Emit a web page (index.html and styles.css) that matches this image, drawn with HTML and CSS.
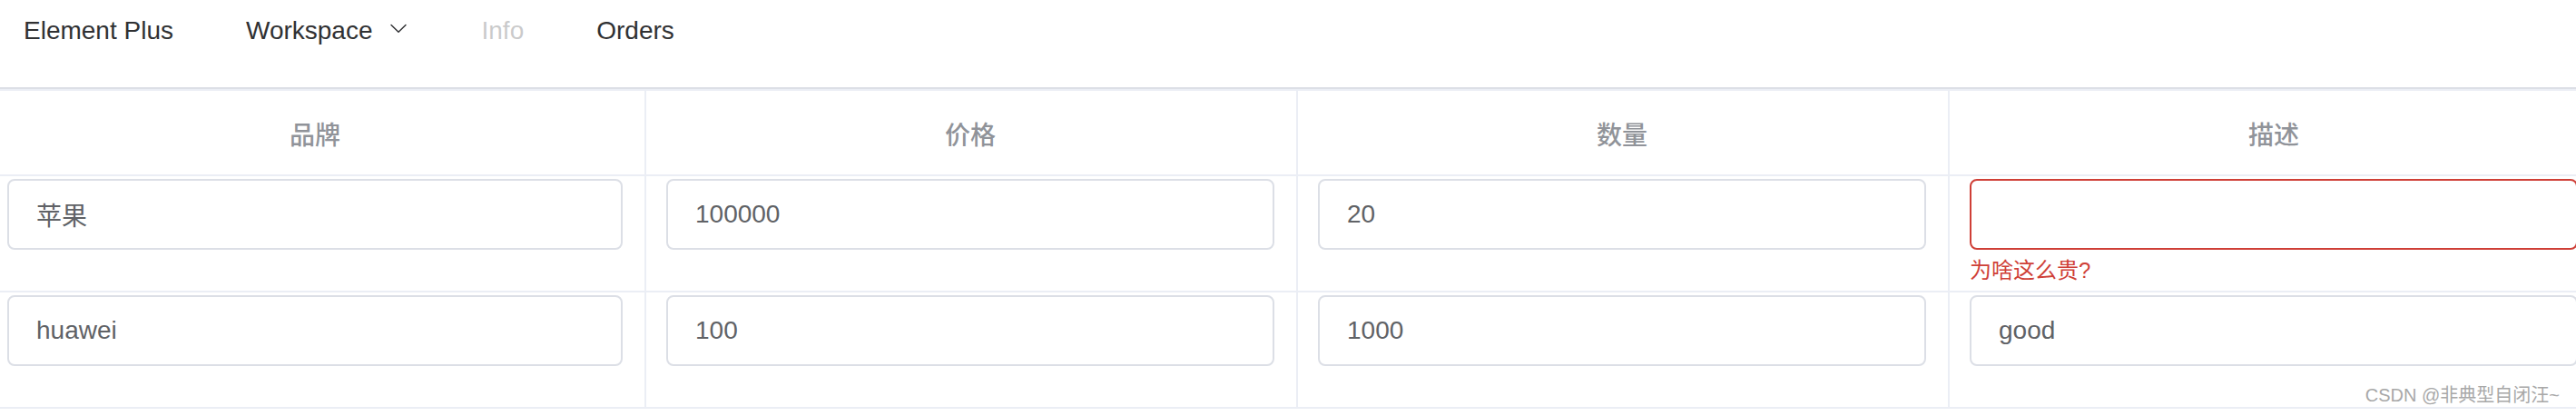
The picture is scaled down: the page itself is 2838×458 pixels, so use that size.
FILE: index.html
```html
<!DOCTYPE html>
<html lang="zh-CN">
<head>
<meta charset="utf-8">
<title>Element Plus Table Form</title>
<link rel="stylesheet" href="styles.css">
</head>
<body>
<div class="page">
  <nav class="menu">
    <div class="menu-item">Element Plus</div>
    <div class="menu-item submenu">Workspace
      <svg class="arrow" viewBox="0 0 1024 1024" xmlns="http://www.w3.org/2000/svg"><path d="M831.872 340.864 512 652.672 192.128 340.864a30.592 30.592 0 0 0-42.752 0 29.12 29.12 0 0 0 0 41.6L489.664 714.24a32 32 0 0 0 44.672 0l340.288-331.712a29.12 29.12 0 0 0 0-41.728 30.592 30.592 0 0 0-42.752 0z"/></svg>
    </div>
    <div class="menu-item disabled">Info</div>
    <div class="menu-item">Orders</div>
  </nav>

  <div class="table">
    <div class="th">品牌</div>
    <div class="th">价格</div>
    <div class="th">数量</div>
    <div class="th">描述</div>

    <div class="td"><div class="form-item"><div class="input">苹果</div></div></div>
    <div class="td"><div class="form-item"><div class="input">100000</div></div></div>
    <div class="td"><div class="form-item"><div class="input">20</div></div></div>
    <div class="td"><div class="form-item is-error"><div class="input"></div><div class="error">为啥这么贵?</div></div></div>

    <div class="td"><div class="form-item"><div class="input">huawei</div></div></div>
    <div class="td"><div class="form-item"><div class="input">100</div></div></div>
    <div class="td"><div class="form-item"><div class="input">1000</div></div></div>
    <div class="td"><div class="form-item"><div class="input">good</div></div></div>
  </div>
</div>
<div class="watermark">CSDN @非典型自闭汪~</div>
</body>
</html>
```

FILE: styles.css
```css
* {
  box-sizing: border-box;
}

html, body {
  margin: 0;
  padding: 0;
  background: #ffffff;
}

body {
  position: relative;
  overflow: hidden;
  width: 2838px;
  height: 458px;
  font-family: "Liberation Sans", "Noto Sans CJK SC", sans-serif;
}

.page {
  margin-left: -14px;
  width: 2880px;
}

/* ---------- menu ---------- */
.menu {
  display: flex;
  height: 98px;
  border-bottom: 2px solid #dcdfe6;
}

.menu-item {
  display: flex;
  align-items: center;
  height: 68px;
  padding: 0 40px;
  font-size: 28px;
  line-height: 68px;
  color: #303133;
  white-space: nowrap;
}

.menu-item.disabled {
  opacity: 0.25;
}

.arrow {
  width: 24px;
  height: 24px;
  margin-left: 16px;
  margin-top: -6px;
  fill: #303133;
}

/* ---------- table ---------- */
.table {
  display: grid;
  grid-template-columns: 726px 718px 718px 718px;
  border-top: 2px solid #ebeef5;
}

.th {
  display: flex;
  align-items: center;
  justify-content: center;
  height: 94px;
  padding: 2px 24px 0 22px;
  border-right: 2px solid #ebeef5;
  border-bottom: 2px solid #ebeef5;
  color: #909399;
  font-size: 28px;
  font-weight: 500;
}

.td {
  padding: 3px 24px 9px 22px;
  border-right: 2px solid #ebeef5;
  border-bottom: 2px solid #ebeef5;
}

.form-item {
  padding-bottom: 36px;
}

.form-item.is-error {
  padding-bottom: 0;
}

.input {
  display: flex;
  align-items: center;
  height: 78px;
  padding: 0 30px;
  border: 2px solid #dcdfe6;
  border-radius: 8px;
  font-size: 28px;
  color: #606266;
  background: #ffffff;
}

.is-error .input {
  border-color: #cf3f37;
}

.error {
  height: 36px;
  padding-top: 11px;
  font-size: 24px;
  line-height: 24px;
  color: #cf3f37;
}

/* ---------- watermark ---------- */
.watermark {
  position: absolute;
  right: 18px;
  top: 425px;
  font-size: 20px;
  line-height: 20px;
  color: #a8a8a8;
  white-space: nowrap;
}
```
